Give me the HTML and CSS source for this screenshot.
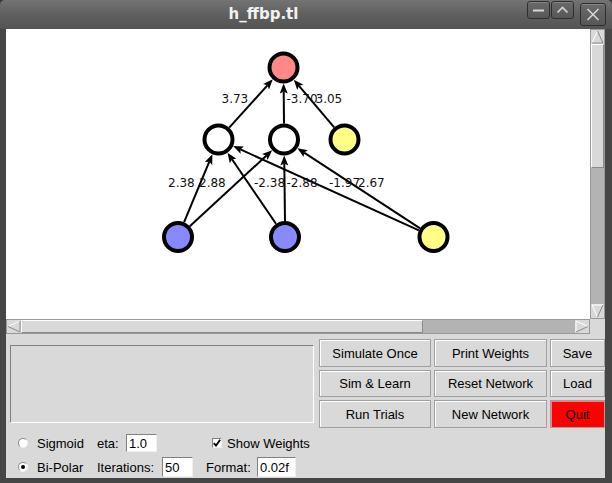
FILE: index.html
```html
<!DOCTYPE html>
<html>
<head>
<meta charset="utf-8">
<title>h_ffbp.tl</title>
<link rel="stylesheet" href="styles.css">
</head>
<body>
<div class="window">
  <div class="titlebar">
    <div class="title">h_ffbp.tl</div>
    <div class="wm-buttons">
      <div class="wm-btn small">
        <svg class="glyph" width="21" height="16" viewBox="0 0 21 16"><path d="M5 8.5h11" stroke="#d6d6d6" stroke-width="2"/></svg>
      </div>
      <div class="wm-btn small">
        <svg class="glyph" width="21" height="16" viewBox="0 0 21 16"><path d="M5.5 10.5l5-5 5 5" fill="none" stroke="#d6d6d6" stroke-width="1.6"/></svg>
      </div>
      <div class="wm-btn close">
        <svg class="glyph" width="24" height="21" viewBox="0 0 24 21"><path d="M6.5 5l11 11M17.5 5l-11 11" stroke="#d6d6d6" stroke-width="1.6"/></svg>
      </div>
    </div>
  </div>
  <div class="client">
    <div class="canvas-row">
      <div class="canvas">
        <svg class="net" width="584" height="290" viewBox="6 29 584 290">
          <defs>
            <marker id="ah" markerWidth="12" markerHeight="10" refX="0" refY="0" orient="auto" markerUnits="userSpaceOnUse" overflow="visible">
              <path d="M8,0 L-2,-4 L0,0 L-2,4 Z" fill="#000"/>
            </marker>
          </defs>
          <g class="edges" stroke="#000" stroke-width="2" marker-end="url(#ah)">
            <line x1="229.2" y1="127.6" x2="267.4" y2="85.3"/>
            <line x1="284" y1="123.5" x2="283.7" y2="91.5"/>
            <line x1="334.2" y1="127.3" x2="299" y2="85.8"/>
            <line x1="184.1" y1="222.2" x2="209.3" y2="161.7"/>
            <line x1="189.8" y1="226.2" x2="266.3" y2="155.7"/>
            <line x1="276" y1="223.8" x2="232" y2="159.3"/>
            <line x1="285" y1="221" x2="284.3" y2="163.5"/>
            <line x1="418.9" y1="230.4" x2="240.4" y2="149.4"/>
            <line x1="420.1" y1="228.3" x2="304.1" y2="152.6"/>
          </g>
          <g class="nodes" stroke="#000" stroke-width="4">
            <circle cx="283.5" cy="67.5" r="14" fill="#ff8888"/>
            <circle cx="218.5" cy="139.5" r="14" fill="#ffffff"/>
            <circle cx="284" cy="139.5" r="14" fill="#ffffff"/>
            <circle cx="344.5" cy="139.5" r="14" fill="#ffff88"/>
            <circle cx="178" cy="237" r="14" fill="#8888ff"/>
            <circle cx="285" cy="237" r="14" fill="#8888ff"/>
            <circle cx="433.5" cy="237" r="14" fill="#ffff88"/>
          </g>
          <g class="labels">
            <text x="221.5" y="102.5">3.73</text>
            <text x="286.5" y="102.5">-3.70</text>
            <text x="315.5" y="102.5">3.05</text>
            <text x="168" y="187">2.38</text>
            <text x="199" y="187">2.88</text>
            <text x="254" y="187">-2.38</text>
            <text x="286.5" y="187">-2.88</text>
            <text x="329" y="187">-1.97</text>
            <text x="358" y="187">2.67</text>
          </g>
        </svg>
      </div>
      <div class="vscroll">
        <svg class="arrow-v" width="13" height="14" viewBox="0 0 13 14">
          <polygon points="6.5,1 12,13 1,13" fill="#d9d9d9"/>
          <polyline points="1,13 6.5,1" fill="none" stroke="#fff"/>
          <polyline points="6.5,1 12,13 1,13" fill="none" stroke="#8a8a8a"/>
        </svg>
        <div class="vthumb"></div>
        <div class="trough"></div>
        <svg class="arrow-v" width="13" height="14" viewBox="0 0 13 14">
          <polygon points="1,1 12,1 6.5,13" fill="#d9d9d9"/>
          <polyline points="6.5,13 1,1 12,1" fill="none" stroke="#fff"/>
          <polyline points="12,1 6.5,13" fill="none" stroke="#8a8a8a"/>
        </svg>
      </div>
    </div>
    <div class="hscroll-row">
      <div class="hscroll">
        <svg class="arrow-h" width="14" height="13" viewBox="0 0 14 13">
          <polygon points="1,6.5 13,1 13,12" fill="#d9d9d9"/>
          <polyline points="13,1 1,6.5" fill="none" stroke="#fff"/>
          <polyline points="1,6.5 13,12 13,1" fill="none" stroke="#8a8a8a"/>
        </svg>
        <div class="hthumb"></div>
        <div class="trough"></div>
        <svg class="arrow-h" width="14" height="13" viewBox="0 0 14 13">
          <polygon points="1,1 13,6.5 1,12" fill="#d9d9d9"/>
          <polyline points="1,12 1,1 13,6.5" fill="none" stroke="#fff"/>
          <polyline points="13,6.5 1,12" fill="none" stroke="#8a8a8a"/>
        </svg>
      </div>
      <div class="corner"></div>
    </div>
    <div class="panel">
      <div class="panel-top">
        <div class="output"></div>
        <div class="buttons">
          <div class="btn">Simulate Once</div>
          <div class="btn">Print Weights</div>
          <div class="btn">Save</div>
          <div class="btn">Sim &amp; Learn</div>
          <div class="btn">Reset Network</div>
          <div class="btn">Load</div>
          <div class="btn">Run Trials</div>
          <div class="btn">New Network</div>
          <div class="btn quit">Quit</div>
        </div>
      </div>
      <div class="controls">
        <div class="ctrl-row row1">
          <span class="radio"></span>
          <span class="opt-label">Sigmoid</span>
          <span class="lbl lbl-eta">eta:</span>
          <span class="entry entry-eta">1.0</span>
          <span class="check">
            <svg width="8" height="8" viewBox="0 0 8 8"><path d="M0.8 4.2l2.2 2.4 4.2-5.8" fill="none" stroke="#000" stroke-width="1.8"/></svg>
          </span>
          <span class="lbl">Show Weights</span>
        </div>
        <div class="ctrl-row row2">
          <span class="radio on"><span class="dot"></span></span>
          <span class="opt-label">Bi-Polar</span>
          <span class="lbl lbl-iter">Iterations:</span>
          <span class="entry entry-iter">50</span>
          <span class="lbl lbl-fmt">Format:</span>
          <span class="entry entry-fmt">0.02f</span>
        </div>
      </div>
    </div>
  </div>
</div>
</body>
</html>
```
FILE: styles.css
```css
* { box-sizing: border-box; }
html, body { margin: 0; padding: 0; }
body {
  width: 612px;
  height: 483px;
  overflow: hidden;
  background: #3a3a3a;
  font-family: "Liberation Sans", Arial, sans-serif;
}
.window {
  width: 612px;
  height: 483px;
  background: #464646;
  border-radius: 5px 5px 0 0;
  display: flex;
  flex-direction: column;
}
.titlebar {
  height: 29px;
  flex: none;
  display: flex;
  background: linear-gradient(#737373, #5e5e5e 55%, #545454);
  border-radius: 5px 5px 0 0;
}
.title {
  flex: 1;
  text-align: center;
  color: #f2f2f2;
  font: bold 15px/29px "DejaVu Sans", sans-serif;
}
.wm-buttons {
  display: flex;
  align-items: flex-start;
  margin-right: 6px;
}
.wm-btn {
  border: 1px solid #2e2e2e;
  border-radius: 3px;
  background: linear-gradient(#6a6a6a, #575757);
  box-shadow: inset 0 1px 0 rgba(255,255,255,0.18);
}
.wm-btn.small {
  width: 23px;
  height: 18px;
  margin-top: 1px;
}
.wm-btn.small + .wm-btn.small { margin-left: 1px; }
.wm-btn.close {
  width: 26px;
  height: 23px;
  margin-top: 3px;
  margin-left: 6px;
}
.glyph { display: block; }
.client {
  flex: 1;
  margin: 0 7px 5px 6px;
  display: flex;
  flex-direction: column;
}
.canvas-row {
  height: 290px;
  display: flex;
}
.canvas {
  flex: 1;
  background: #ffffff;
}
.net { display: block; }
.labels text {
  font-family: "DejaVu Sans", sans-serif;
  font-size: 12px;
  fill: #111;
}
.vscroll {
  width: 15px;
  display: flex;
  flex-direction: column;
  background: #b3b3b3;
  border: 1px solid #999;
}
.arrow-v, .arrow-h { display: block; flex: none; background: #d9d9d9; }
.vthumb {
  height: 124px;
  flex: none;
  background: #d9d9d9;
  border: 1px solid;
  border-color: #fff #8a8a8a #8a8a8a #fff;
}
.trough { flex: 1; }
.hscroll-row {
  height: 15px;
  display: flex;
}
.hscroll {
  flex: 1;
  display: flex;
  background: #b3b3b3;
  border: 1px solid #999;
}
.hthumb {
  width: 402px;
  flex: none;
  background: #d9d9d9;
  border: 1px solid;
  border-color: #fff #8a8a8a #8a8a8a #fff;
}
.corner {
  width: 15px;
  background: #d9d9d9;
}
.panel {
  height: 144px;
  background: #d9d9d9;
  display: flex;
  flex-direction: column;
  font-size: 13px;
  color: #000;
}
.panel-top {
  display: flex;
  padding-top: 5px;
  height: 94px;
}
.output {
  width: 304px;
  height: 78px;
  margin: 6px 0 0 4px;
  border: 1px solid;
  border-color: #808080 #fff #fff #808080;
}
.buttons {
  margin-left: 5px;
  display: grid;
  grid-template-columns: 112px 113px 55px;
  grid-template-rows: 28px 27px 28px;
  gap: 3px;
}
.btn {
  display: flex;
  align-items: center;
  justify-content: center;
  border: 1px solid #a0a0a0;
  box-shadow: inset 1px 1px 0 #fff;
  background: #d9d9d9;
}
.btn.quit {
  background: #ff0000;
  box-shadow: inset 1px 1px 0 #ff7a7a;
}
.controls {
  padding-top: 6px;
  display: flex;
  flex-direction: column;
  gap: 5px;
}
.ctrl-row {
  display: flex;
  align-items: center;
}
.row1 { height: 18px; }
.row2 { height: 20px; }
.radio {
  width: 10px;
  height: 10px;
  margin-left: 12px;
  margin-right: 9px;
  border-radius: 50%;
  background: #fff;
  border: 1px solid;
  border-color: #8c8c8c #f2f2f2 #f2f2f2 #8c8c8c;
  display: flex;
  align-items: center;
  justify-content: center;
}
.dot {
  width: 4px;
  height: 4px;
  border-radius: 50%;
  background: #000;
}
.opt-label { width: 60px; }
.lbl-eta { width: 29px; }
.lbl-iter { width: 65px; }
.lbl-fmt { width: 51px; margin-left: 13px; }
.entry {
  height: 100%;
  background: #fff;
  border: 1px solid;
  border-color: #808080 #f0f0f0 #f0f0f0 #808080;
  padding-left: 2px;
  display: flex;
  align-items: center;
}
.entry-eta { width: 31px; }
.entry-iter { width: 31px; }
.entry-fmt { width: 39px; }
.check {
  width: 10px;
  height: 10px;
  margin-left: 55px;
  margin-right: 5px;
  background: #fff;
  border: 1px solid;
  border-color: #808080 #f0f0f0 #f0f0f0 #808080;
  display: flex;
  align-items: center;
  justify-content: center;
}
.check svg { display: block; }
```
